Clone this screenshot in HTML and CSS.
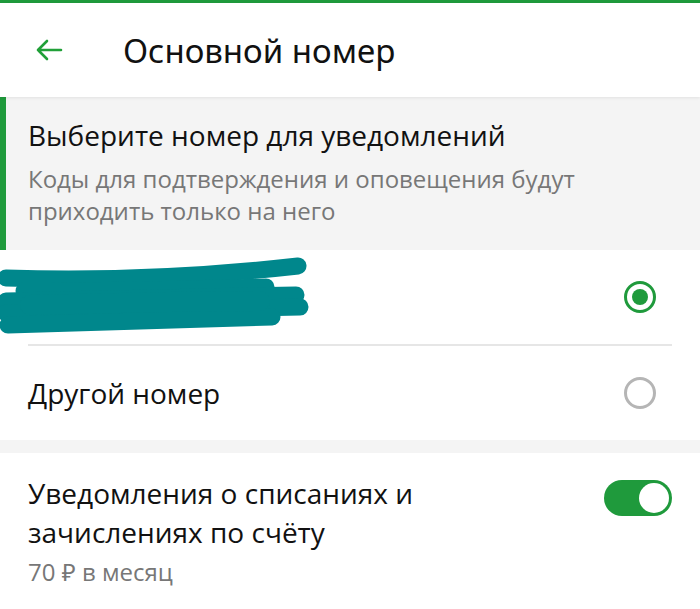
FILE: index.html
```html
<!DOCTYPE html>
<html lang="ru">
<head>
<meta charset="utf-8">
<link rel="stylesheet" href="styles.css">
</head>
<body>
<div class="topline"></div>
<header class="header">
  <svg class="back" width="28" height="24" viewBox="0 0 28 24">
    <path d="M26 12H3M12 3L3 12l9 9" fill="none" stroke="#21a038" stroke-width="2.6" stroke-linecap="round" stroke-linejoin="round"/>
  </svg>
  <h1 class="title">Основной номер</h1>
</header>
<section class="info">
  <div class="info-title">Выберите номер для уведомлений</div>
  <div class="info-text">Коды для подтверждения и оповещения будут приходить только на него</div>
</section>
<div class="row row-first">
  <svg class="scribble" width="310" height="80" viewBox="0 0 310 80">
    <g fill="none" stroke="#00878c" stroke-linecap="round" stroke-width="17">
      <path d="M6 21 C100 24 200 20 298 9"/>
      <path d="M24 34 C120 34 200 32 266 30"/>
      <path d="M6 44 C100 42 200 40 296 38"/>
      <path d="M6 56 C100 54 200 52 300 50"/>
      <path d="M8 68 C90 66 180 62 272 60"/>
      <path d="M30 48 C120 46 200 44 260 44" stroke-width="20"/>
    </g>
  </svg>
  <span class="radio radio-on"></span>
</div>
<div class="divider"></div>
<div class="row">
  <span class="row-label">Другой номер</span>
  <span class="radio"></span>
</div>
<div class="gap"></div>
<div class="row row-toggle">
  <div class="toggle-text">
    <div class="row-label">Уведомления о списаниях и зачислениях по счёту</div>
    <div class="price">70 ₽ в месяц</div>
  </div>
  <span class="toggle"><span class="knob"></span></span>
</div>
</body>
</html>
```

FILE: styles.css
```css
* { box-sizing: border-box; }
html, body { margin: 0; padding: 0; background: #fff; }
body {
  width: 700px;
  height: 609px;
  overflow: hidden;
  font-family: "Open Sans", "Noto Sans", sans-serif;
  color: #111;
}
.topline { height: 3px; background: #1f9a3c; }
.header {
  height: 94px;
  display: flex;
  align-items: center;
  padding-left: 35px;
  position: relative;
  z-index: 1;
  box-shadow: 0 1px 3px rgba(0,0,0,0.08);
  background: #fff;
}
.back { display: block; }
.title {
  margin: 0 0 0 60px;
  font-family: "Noto Sans", sans-serif;
  font-weight: 400;
  font-size: 33px;
  color: #111;
}
.info {
  background: #f4f4f4;
  border-left: 6px solid #1f9a3c;
  padding: 19px 30px 20px 22px;
  height: 153px;
}
.info-title {
  font-size: 28px;
  line-height: 38px;
  color: #111;
}
.info-text {
  margin-top: 9px;
  font-size: 24px;
  line-height: 32px;
  color: #777;
}
.row {
  display: flex;
  align-items: center;
  justify-content: space-between;
  padding: 0 44px 0 28px;
  height: 94px;
}
.row-first { padding-left: 0; }
.scribble { display: block; }
.divider { height: 2px; background: #e6e6e6; margin-left: 28px; margin-right: 28px; }
.row-label { font-size: 28px; line-height: 39px; color: #111; }
.radio {
  width: 32px; height: 32px;
  border-radius: 50%;
  border: 3px solid #b5b5b5;
  display: block;
  position: relative;
  flex: none;
}
.radio-on { border-color: #1f9a3c; }
.radio-on::after {
  content: "";
  position: absolute;
  left: 5px; top: 5px;
  width: 16px; height: 16px;
  border-radius: 50%;
  background: #1f9a3c;
}
.gap { height: 13px; background: #f4f4f4; }
.row-toggle { align-items: flex-start; height: auto; padding-top: 21px; padding-right: 28px; }
.toggle-text { width: 520px; }
.price { margin-top: 4px; font-size: 24px; color: #777; line-height: 32px; }
.toggle {
  margin-top: 6px;
  width: 68px; height: 36px;
  border-radius: 18px;
  background: #1f9a3c;
  position: relative;
  flex: none;
}
.knob {
  position: absolute;
  right: 3px; top: 3px;
  width: 30px; height: 30px;
  border-radius: 50%;
  background: #fff;
}
```
